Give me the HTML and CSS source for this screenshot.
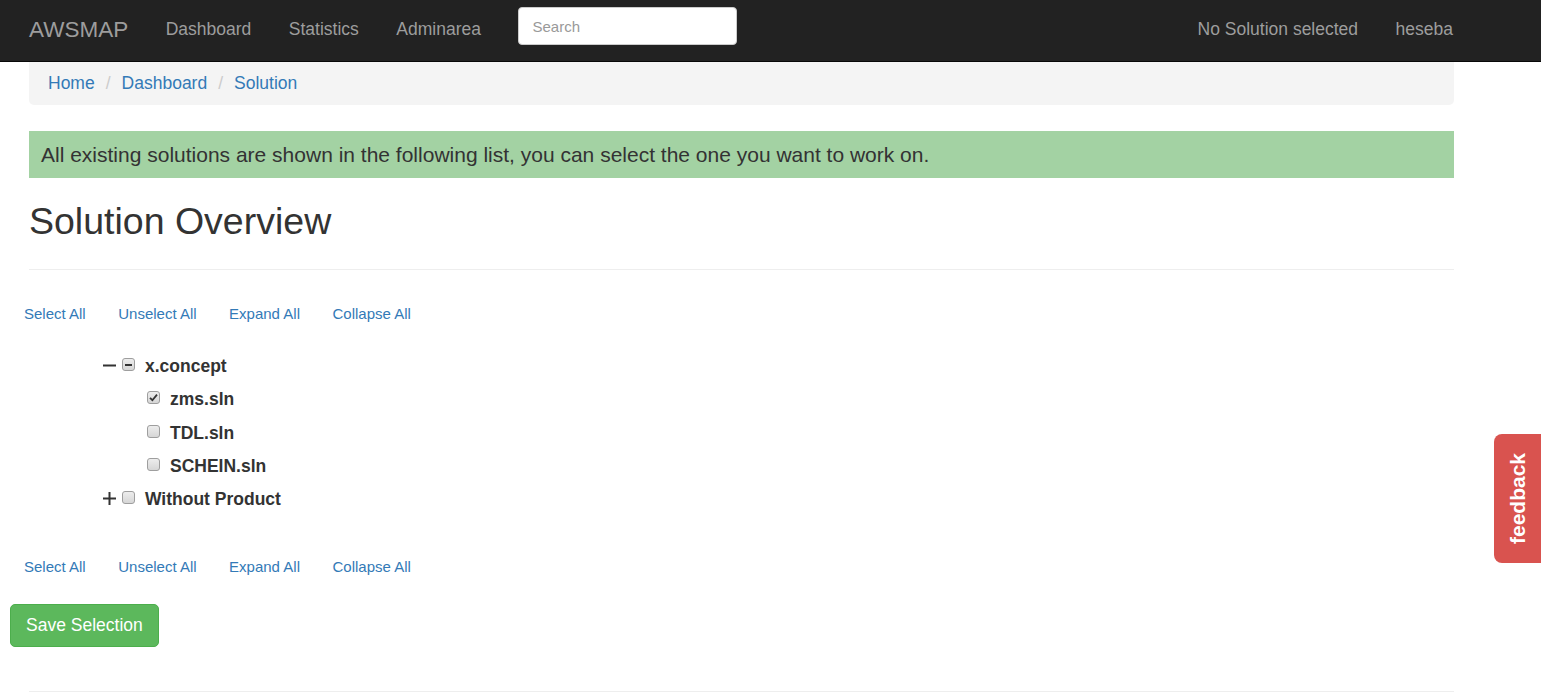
FILE: index.html
```html
<!DOCTYPE html>
<html lang="en">
<head>
<meta charset="utf-8">
<title>AWSMAP - Solution Overview</title>
<link rel="stylesheet" href="styles.css">
</head>
<body>
<nav class="navbar">
  <a class="brand" href="#">AWSMAP</a>
  <a class="nav-link" href="#">Dashboard</a>
  <a class="nav-link" href="#">Statistics</a>
  <a class="nav-link" href="#">Adminarea</a>
  <input class="search" type="text" placeholder="Search">
  <div class="spacer"></div>
  <a class="nav-link" href="#">No Solution selected</a>
  <a class="nav-link" href="#">heseba</a>
</nav>

<div class="container">
  <ol class="breadcrumb">
    <li><a href="#">Home</a></li>
    <li class="sep">/</li>
    <li><a href="#">Dashboard</a></li>
    <li class="sep">/</li>
    <li><a href="#">Solution</a></li>
  </ol>
  <div class="alert">All existing solutions are shown in the following list, you can select the one you want to work on.</div>
  <div class="page-header">
    <h1>Solution Overview</h1>
  </div>
</div>

<section class="tree-widget">
  <div class="tools">
    <a href="#">Select All</a>
    <a href="#">Unselect All</a>
    <a href="#">Expand All</a>
    <a href="#">Collapse All</a>
  </div>

  <ul class="tree">
    <li class="row top">
      <svg class="expander" width="13" height="13" viewBox="0 0 13 13"><rect x="0" y="5.5" width="13" height="2" fill="#333"/></svg>
      <span class="cb indeterminate"><span class="dash"></span></span>
      <span class="label">x.concept</span>
    </li>
    <li class="row child">
      <span class="cb checked"><svg width="9" height="9" viewBox="0 0 9 9"><path d="M1 4.8 L3.4 7.2 L8 1.6" fill="none" stroke="#333" stroke-width="1.8"/></svg></span>
      <span class="label">zms.sln</span>
    </li>
    <li class="row child">
      <span class="cb"></span>
      <span class="label">TDL.sln</span>
    </li>
    <li class="row child">
      <span class="cb"></span>
      <span class="label">SCHEIN.sln</span>
    </li>
    <li class="row top">
      <svg class="expander" width="13" height="13" viewBox="0 0 13 13"><rect x="0" y="5.5" width="13" height="2" fill="#333"/><rect x="5.5" y="0" width="2" height="13" fill="#333"/></svg>
      <span class="cb"></span>
      <span class="label">Without Product</span>
    </li>
  </ul>

  <div class="tools bottom">
    <a href="#">Select All</a>
    <a href="#">Unselect All</a>
    <a href="#">Expand All</a>
    <a href="#">Collapse All</a>
  </div>

  <button class="btn-save" type="button">Save Selection</button>
</section>

<div class="container">
  <hr class="footer-rule">
</div>

<a class="feedback" href="#"><span>feedback</span></a>
</body>
</html>
```

FILE: styles.css
```css
* { box-sizing: border-box; }

html, body {
  margin: 0;
  padding: 0;
  background: #fff;
}

body {
  font-family: "Liberation Sans", Arial, Helvetica, sans-serif;
  color: #333;
  font-size: 17.5px;
  line-height: 1.42857;
}

a { text-decoration: none; }

/* Navbar */
.navbar {
  display: flex;
  align-items: center;
  height: 62px;
  padding: 0 88px 1px 29px;
  background: #222;
  border-bottom: 1px solid #080808;
}

.brand {
  font-size: 22.5px;
  color: #9d9d9d;
  line-height: 25px;
  margin-right: 37.5px;
  margin-top: -2px;
}

.nav-link {
  font-size: 17.5px;
  color: #9d9d9d;
  line-height: 25px;
  margin-right: 37.5px;
  margin-top: -2px;
}

.nav-link:last-child { margin-right: 0; }

.search {
  width: 219px;
  height: 38px;
  margin-left: 0;
  margin-top: -8px;
  padding: 0 13px;
  font-family: "Liberation Sans", Arial, sans-serif;
  font-size: 15px;
  color: #555;
  background: #fff;
  border: 1px solid #ccc;
  border-radius: 4px;
}

.search::placeholder { color: #999; }

.spacer { flex: 1; }

/* Container */
.container {
  margin-left: 29px;
  width: 1425px;
}

.breadcrumb {
  list-style: none;
  margin: 0;
  height: 43px;
  padding: 0 19px;
  display: flex;
  align-items: center;
  background: #f4f4f4;
  border-radius: 0 0 5px 5px;
}

.breadcrumb a { color: #337ab7; }

.breadcrumb .sep {
  color: #ccc;
  margin: 0 11px;
}

.alert {
  margin-top: 26px;
  height: 47px;
  padding: 0 12px;
  display: flex;
  align-items: center;
  background: #a3d2a3;
  color: #333;
  font-size: 21px;
}

.page-header {
  border-bottom: 1px solid #eee;
  padding-bottom: 27px;
  margin-top: 23px;
}

.page-header h1 {
  margin: 0;
  font-size: 37.5px;
  font-weight: 500;
  line-height: 41px;
  color: #333;
}

/* Tree widget */
.tree-widget {
  padding-left: 10px;
}

.tools {
  display: flex;
  gap: 32.5px;
  margin-top: 33px;
  padding-left: 14px;
  font-size: 15px;
  line-height: 21px;
}

.tools a { color: #337ab7; }

.tools.bottom { margin-top: 40px; }

.tree {
  list-style: none;
  margin: 26px 0 0 0;
  padding: 0;
}

.row {
  display: flex;
  align-items: center;
  height: 33.25px;
  font-weight: bold;
  color: #333;
}

.row.top { padding-left: 93px; }
.row.child { padding-left: 137px; }

.expander {
  flex: none;
  margin-right: 6px;
  margin-top: -3px;
}

.cb {
  flex: none;
  width: 13px;
  height: 13px;
  margin-right: 10px;
  margin-top: -4px;
  border: 1px solid #9e9e9e;
  border-radius: 3px;
  background: linear-gradient(#ededed, #d6d6d6);
  display: flex;
  align-items: center;
  justify-content: center;
}

.cb .dash {
  width: 7px;
  height: 2px;
  background: #333;
}

.label { line-height: 25px; }

.btn-save {
  margin-top: 27px;
  display: block;
  height: 43px;
  padding: 0 15px;
  font-family: "Liberation Sans", Arial, sans-serif;
  font-size: 17.5px;
  color: #fff;
  background: #5cb85c;
  border: 1px solid #4cae4c;
  border-radius: 5px;
}

.footer-rule {
  margin: 44px 0 0 0;
  border: 0;
  border-top: 1px solid #eee;
}

/* Feedback tab */
.feedback {
  position: fixed;
  right: 0;
  top: 434px;
  width: 47px;
  height: 129px;
  background: #d9534f;
  border-radius: 8px 0 0 8px;
  display: flex;
  align-items: center;
  justify-content: center;
}

.feedback span {
  writing-mode: vertical-rl;
  transform: rotate(180deg);
  color: #fff;
  font-weight: bold;
  font-size: 21px;
  line-height: 24px;
}
```
